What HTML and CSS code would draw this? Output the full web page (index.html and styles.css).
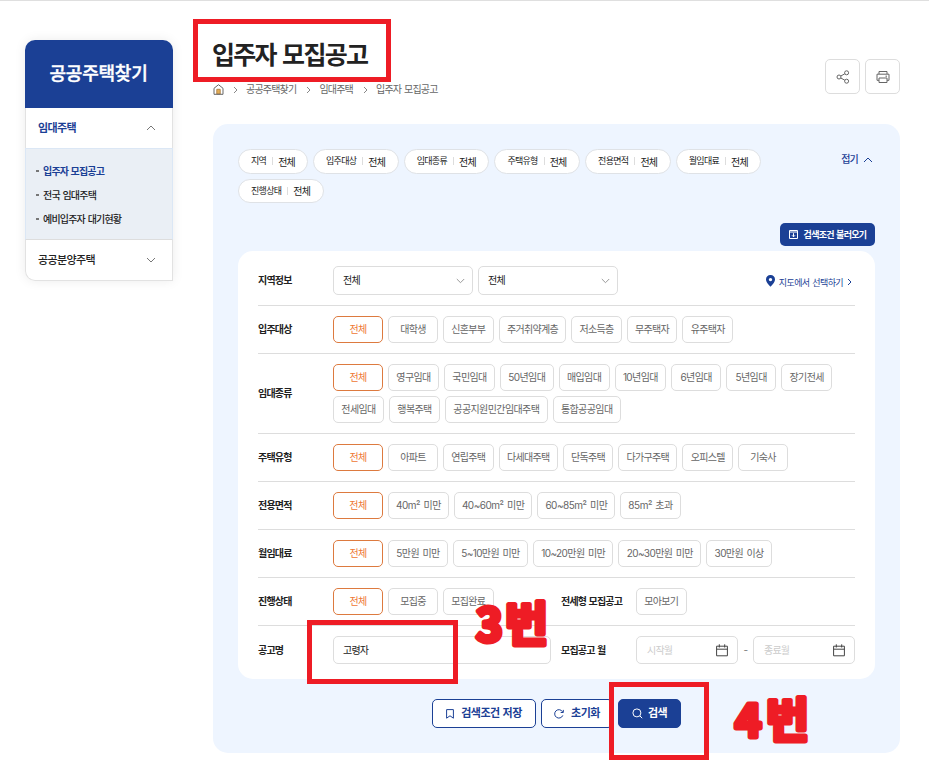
FILE: index.html
```html
<!DOCTYPE html>
<html lang="ko">
<head>
  <meta charset="UTF-8">
  <meta name="viewport" content="width=device-width, initial-scale=1.0">
  <title>입주자 모집공고</title>
  <link rel="stylesheet" href="styles.css">
</head>
<body>
  <div class="page">
    <aside class="sidebar">
      <h2>공공주택찾기</h2>
      <a class="menu active">임대주택
        <svg width="10" height="6" viewBox="0 0 10 6"><path d="M1 5l4-4 4 4"/></svg>
      </a>
      <ul class="submenu">
        <li class="on">입주자 모집공고</li>
        <li>전국 임대주택</li>
        <li>예비입주자 대기현황</li>
      </ul>
      <a class="menu last">공공분양주택
        <svg width="10" height="6" viewBox="0 0 10 6"><path d="M1 1l4 4 4-4"/></svg>
      </a>
    </aside>

    <main>
      <header class="title-area">
        <div>
          <h1>입주자 모집공고</h1>
          <nav class="breadcrumb">
            <svg class="home" width="11" height="11" viewBox="0 0 11 11"><path class="door" d="M3.8 10V5.3h3.4V10z"/><path d="M1 4.3L5.5.7 10 4.3v6H1z"/></svg>
            <svg class="sep" width="5" height="8" viewBox="0 0 5 8"><path d="M1 1l3 3-3 3"/></svg>
            <span>공공주택찾기</span>
            <svg class="sep" width="5" height="8" viewBox="0 0 5 8"><path d="M1 1l3 3-3 3"/></svg>
            <span>임대주택</span>
            <svg class="sep" width="5" height="8" viewBox="0 0 5 8"><path d="M1 1l3 3-3 3"/></svg>
            <span>입주자 모집공고</span>
          </nav>
        </div>
        <div class="tools">
          <button><svg width="14" height="14" viewBox="0 0 14 14"><circle cx="3" cy="7" r="2"/><circle cx="10.6" cy="2.8" r="2"/><circle cx="10.6" cy="11.2" r="2"/><path d="M4.8 6l4-2.2M4.8 8l4 2.2"/></svg></button>
          <button><svg width="14" height="14" viewBox="0 0 14 14"><path d="M3 4V1.5h8V4M3 10.3H1V4.2h12v6.1h-2M3 8h8v4.5H3zM9.5 6.2h1.5"/></svg></button>
        </div>
      </header>

      <section class="panel">
        <div class="summary">
          <ul class="tags">
            <li><b>지역</b><span>전체</span></li>
            <li><b>입주대상</b><span>전체</span></li>
            <li><b>임대종류</b><span>전체</span></li>
            <li><b>주택유형</b><span>전체</span></li>
            <li><b>전용면적</b><span>전체</span></li>
            <li><b>월임대료</b><span>전체</span></li>
            <li><b>진행상태</b><span>전체</span></li>
          </ul>
          <a class="fold">접기 <svg width="10" height="6" viewBox="0 0 10 6"><path d="M1 5l4-4 4 4"/></svg></a>
        </div>
        <div class="load-row">
          <button class="load"><svg width="9" height="9" viewBox="0 0 9 9"><path d="M.5.5h8v8h-8zM.5 2h8M4.5 3.2v3.5M3 5.3l1.5 1.5L6 5.3"/></svg>검색조건 불러오기</button>
        </div>

        <div class="card">
          <div class="row first">
            <strong>지역정보</strong>
            <div class="field select">전체 <svg width="9" height="6" viewBox="0 0 9 6"><path d="M.8 1l3.7 3.7L8.2 1"/></svg></div>
            <div class="field select">전체 <svg width="9" height="6" viewBox="0 0 9 6"><path d="M.8 1l3.7 3.7L8.2 1"/></svg></div>
            <a class="map">
              <svg class="pin" width="9" height="12" viewBox="0 0 9 12"><path fill-rule="evenodd" d="M4.5 0A4.4 4.4 0 0 1 9 4.5C9 7.5 4.5 11.8 4.5 11.8S0 7.5 0 4.5A4.4 4.4 0 0 1 4.5 0zm0 2.9a1.7 1.7 0 1 0 0 3.4 1.7 1.7 0 0 0 0-3.4z"/></svg>
              지도에서 선택하기
              <svg width="5" height="8" viewBox="0 0 5 8"><path d="M1 1l3 3-3 3"/></svg>
            </a>
          </div>
          <div class="row">
            <strong>입주대상</strong>
            <div class="chips">
              <span class="chip on">전체</span><span class="chip">대학생</span><span class="chip">신혼부부</span><span class="chip">주거취약계층</span><span class="chip">저소득층</span><span class="chip">무주택자</span><span class="chip">유주택자</span>
            </div>
          </div>
          <div class="row">
            <strong>임대종류</strong>
            <div class="chips kinds">
              <span class="chip on">전체</span><span class="chip">영구임대</span><span class="chip">국민임대</span><span class="chip">50년임대</span><span class="chip">매입임대</span><span class="chip">10년임대</span><span class="chip">6년임대</span><span class="chip">5년임대</span><span class="chip">장기전세</span>
              <span class="chip">전세임대</span><span class="chip">행복주택</span><span class="chip">공공지원민간임대주택</span><span class="chip">통합공공임대</span>
            </div>
          </div>
          <div class="row">
            <strong>주택유형</strong>
            <div class="chips">
              <span class="chip on">전체</span><span class="chip">아파트</span><span class="chip">연립주택</span><span class="chip">다세대주택</span><span class="chip">단독주택</span><span class="chip">다가구주택</span><span class="chip">오피스텔</span><span class="chip">기숙사</span>
            </div>
          </div>
          <div class="row">
            <strong>전용면적</strong>
            <div class="chips range">
              <span class="chip on">전체</span><span class="chip">40m² 미만</span><span class="chip">40~60m² 미만</span><span class="chip">60~85m² 미만</span><span class="chip">85m² 초과</span>
            </div>
          </div>
          <div class="row">
            <strong>월임대료</strong>
            <div class="chips price">
              <span class="chip on">전체</span><span class="chip">5만원 미만</span><span class="chip">5~10만원 미만</span><span class="chip">10~20만원 미만</span><span class="chip">20~30만원 미만</span><span class="chip">30만원 이상</span>
            </div>
          </div>
          <div class="row">
            <strong>진행상태</strong>
            <div class="chips half">
              <span class="chip on">전체</span><span class="chip">모집중</span><span class="chip">모집완료</span>
            </div>
            <strong>전세형 모집공고</strong>
            <span class="chip">모아보기</span>
          </div>
          <div class="row last">
            <strong>공고명</strong>
            <div class="half"><div class="field name">고령자</div></div>
            <strong>모집공고 월</strong>
            <div class="field date">시작월 <svg width="12" height="13" viewBox="0 0 12 13"><path d="M.6 2.2h10.8v9.6H.6zM.6 5.2h10.8M3.3.3v3.2M8.7.3v3.2"/></svg></div>
            <span class="dash">-</span>
            <div class="field date">종료월 <svg width="12" height="13" viewBox="0 0 12 13"><path d="M.6 2.2h10.8v9.6H.6zM.6 5.2h10.8M3.3.3v3.2M8.7.3v3.2"/></svg></div>
          </div>
        </div>

        <div class="actions">
          <button class="save"><svg width="8" height="10" viewBox="0 0 8 10"><path d="M.6.6h6.8v8.6L4 6.8.6 9.2z"/></svg>검색조건 저장</button>
          <button class="reset"><svg width="10" height="10" viewBox="0 0 10 10"><path d="M8.8 6.4A4.2 4.2 0 1 1 8.6 2.9M9.3.9v2.6H6.7"/></svg>초기화</button>
          <button class="search"><svg width="11" height="11" viewBox="0 0 11 11"><circle cx="4.9" cy="4.9" r="4"/><path d="M7.8 7.8l2.4 2.4"/></svg>검색</button>
        </div>
      </section>
    </main>
  </div>

  <!-- guide marks -->
  <div class="mark mark-title"></div>
  <div class="mark mark-name"></div>
  <div class="mark mark-search"></div>
  <svg class="step step3" width="100" height="80"><text y="55"><tspan class="num" x="5">3</tspan><tspan x="34">번</tspan></text></svg>
  <svg class="step step4" width="100" height="80"><text y="55"><tspan class="num" x="5">4</tspan><tspan x="36">번</tspan></text></svg>
</body>
</html>
```
FILE: styles.css
```css
* {
  box-sizing: border-box;
}
body {
  position: relative;
  height: 768px;
  margin: 0;
  overflow: hidden;
  border-top: 1px solid #dfdfdf;
  background: #fff;
  color: #222;
  font-family: Inter, "Noto Sans CJK KR", sans-serif;
  font-size: 10px;
  letter-spacing: -0.8px;
  word-spacing: 0.8px;
  line-height: 15px;
  white-space: nowrap;
}
h1, h2, ul {
  margin: 0;
  padding: 0;
}
ul {
  list-style: none;
}
svg {
  flex: none;
  fill: none;
  stroke: currentColor;
}
button {
  display: flex;
  align-items: center;
  justify-content: center;
  padding: 0;
  border: 1px solid #ddd;
  border-radius: 5px;
  background: #fff;
  color: inherit;
  font: inherit;
  letter-spacing: inherit;
  word-spacing: inherit;
}
.page {
  display: flex;
  gap: 40px;
  padding: 0 29px 0 25px;
}

/* sidebar */
.sidebar {
  width: 148px;
  height: 241px;
  margin-top: 39px;
  border-radius: 10px 10px 0 10px;
  box-shadow: 0 0 12px rgba(0, 0, 0, 0.08);
}
.sidebar h2 {
  height: 68px;
  padding-right: 1px;
  border-radius: 10px 10px 0 0;
  background: #1b4095;
  color: #fff;
  font-size: 18px;
  font-weight: 500;
  letter-spacing: -0.2px;
  line-height: 68px;
  text-align: center;
  -webkit-text-stroke: 0.4px #fff;
}
.menu {
  display: flex;
  align-items: center;
  justify-content: space-between;
  height: 40px;
  padding: 0 16px 0 12px;
  border: 1px solid #e2e2e2;
  border-width: 0 1px;
  font-size: 11px;
  font-weight: 500;
  letter-spacing: -0.6px;
}
.menu svg {
  color: #777;
}
.menu.active {
  color: #1b4095;
  font-weight: 700;
}
.menu.last {
  height: 41px;
  border-bottom-width: 1px;
  border-radius: 0 0 0 10px;
}
.submenu {
  height: 92px;
  padding-top: 10px;
  border: 1px solid #dbe7f5;
  border-bottom-color: #ddd;
  background: #eaeff5;
}
.submenu li {
  display: flex;
  align-items: center;
  height: 24px;
  padding-left: 10px;
  font-weight: 500;
}
.submenu li::before {
  content: "";
  width: 3px;
  height: 2px;
  margin-right: 4px;
  background: #777;
}
.submenu .on {
  color: #1b4095;
  font-weight: 700;
}

/* title */
main {
  width: 687px;
}
.title-area {
  display: flex;
  justify-content: space-between;
  height: 123px;
}
h1 {
  margin: 36px 0 0 -1px;
  font-size: 25px;
  font-weight: 700;
  letter-spacing: -1.7px;
  word-spacing: 2px;
  line-height: 36px;
}
.breadcrumb {
  display: flex;
  align-items: center;
  gap: 9px;
  margin-top: 9px;
  color: #666;
}
.breadcrumb span {
  margin-left: -1px;
  margin-right: 1px;
}
.breadcrumb .sep {
  color: #888;
}
.breadcrumb .home {
  color: #666;
}
.home .door {
  fill: #e4ae55;
  stroke: #b4874a;
}
.tools {
  display: flex;
  gap: 5px;
  margin-top: 58px;
}
.tools button {
  width: 35px;
  height: 35px;
  color: #666;
}

/* search panel */
.panel {
  height: 629px;
  padding: 25px 25px 0;
  border-radius: 15px;
  background: #eef5ff;
}
.summary {
  display: flex;
  justify-content: space-between;
  height: 74px;
}
.tags {
  display: flex;
  flex-wrap: wrap;
  align-content: flex-start;
  gap: 5px;
  width: 540px;
}
.tags li {
  display: flex;
  align-items: center;
  height: 24.5px;
  min-width: 85.7px;
  padding: 0 10px 0 12px;
  border: 1px solid #dfe2e6;
  border-radius: 13px;
  background: #fff;
}
.tags li:first-child {
  min-width: 70px;
}
.tags b {
  margin-right: 5px;
  padding-right: 6px;
  border-right: 1px solid #ddd;
  font-size: 9px;
  font-weight: 400;
  letter-spacing: -0.7px;
  line-height: 8px;
}
.tags span {
  padding-top: 2px;
}
.fold {
  display: flex;
  align-items: center;
  gap: 5px;
  height: 21px;
  margin-right: 2px;
  color: #1b4095;
  font-weight: 500;
}
.load-row {
  display: flex;
  justify-content: flex-end;
}
.load {
  gap: 6px;
  width: 95px;
  height: 23px;
  border: 0;
  background: #1b4095;
  color: #fff;
  font-size: 9px;
  font-weight: 700;
  letter-spacing: -0.7px;
}
.card {
  height: 428px;
  margin-top: 5px;
  padding: 15px 20px 0;
  border-radius: 15px;
  background: #fff;
}
.row {
  display: flex;
  align-items: center;
  padding: 10px 0;
  border-bottom: 1px solid #ddd;
}
.row.first {
  padding-top: 0;
}
.row.last {
  border: 0;
}
.row strong {
  width: 75px;
  font-weight: 700;
}
.chips {
  display: flex;
  flex-wrap: wrap;
  flex: 1;
  gap: 5px;
}
.chip {
  min-width: 50px;
  height: 27px;
  padding: 0 7.3px;
  border: 1px solid #ddd;
  border-radius: 5px;
  color: #666;
  letter-spacing: -0.7px;
  word-spacing: 1.2px;
  line-height: 25px;
  text-align: center;
}
.chip.on {
  border-color: #dd7a3f;
  color: #ee7733;
}
.kinds .chip {
  letter-spacing: -0.6px;
}
.range .chip {
  padding: 0 7px;
  letter-spacing: -0.5px;
}
.price .chip {
  letter-spacing: -0.6px;
}
.half {
  flex: none;
  width: 228px;
}
.half + strong {
  width: 75px;
}
.field {
  display: flex;
  align-items: center;
  justify-content: space-between;
  height: 28px;
  padding: 0 9px;
  border: 1px solid #ddd;
  border-radius: 5px;
}
.select {
  width: 140px;
  height: 29px;
  margin-right: 5px;
  padding-right: 7px;
}
.select svg {
  color: #999;
}
.map {
  display: flex;
  align-items: center;
  gap: 4px;
  margin: 3px 3px 0 auto;
  color: #1b4095;
  font-size: 9px;
  letter-spacing: -0.6px;
}
.map .pin {
  margin-top: -3px;
  fill: #1b4095;
  stroke: none;
}
.name {
  width: 218px;
}
.date {
  width: 102px;
  padding: 0 9px 0 10px;
  color: #ccc;
}
.date svg {
  color: #444;
}
.dash {
  width: 15px;
  color: #777;
  text-align: center;
}
.actions {
  display: flex;
  gap: 5px;
  margin: 20px 0 0 194px;
}
.actions button {
  gap: 7px;
  height: 29px;
  border-color: #1b4095;
  color: #1b4095;
  font-size: 11px;
  font-weight: 700;
  letter-spacing: -0.5px;
}
.save {
  width: 104px;
}
.reset {
  width: 72px;
}
.actions .search {
  width: 63px;
  gap: 5px;
  background: #1b4095;
  color: #fff;
}

/* guide marks over the page */
.mark {
  position: absolute;
  border: 5px solid #ee1c25;
}
.mark-title {
  left: 193px;
  top: 18px;
  width: 198px;
  height: 63px;
}
.mark-name {
  left: 307px;
  top: 619px;
  width: 151px;
  height: 64px;
}
.mark-search {
  left: 609px;
  top: 681px;
  width: 100px;
  height: 78px;
}
.step {
  position: absolute;
  fill: #ee1c25;
  stroke: #ee1c25;
  stroke-width: 5px;
  stroke-linejoin: round;
  stroke-linecap: round;
  font-family: "Noto Sans CJK KR", sans-serif;
  font-size: 47px;
  font-weight: 700;
  letter-spacing: 0;
}
.step .num {
  font-size: 45px;
}
.step3 {
  left: 471px;
  top: 585px;
}
.step4 {
  left: 730px;
  top: 681px;
}
```
